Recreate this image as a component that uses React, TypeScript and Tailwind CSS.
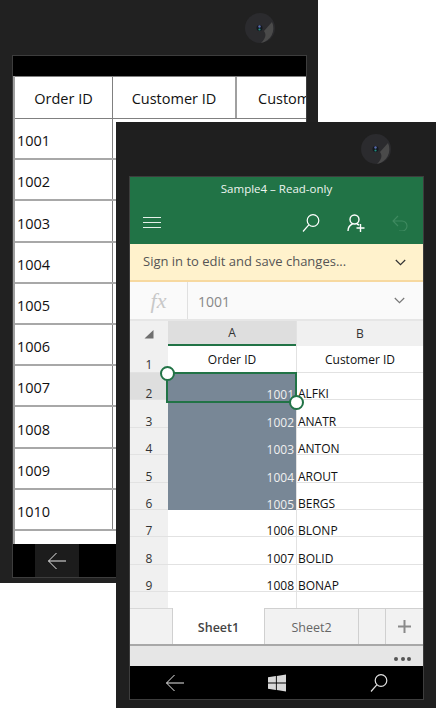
const font = "font-['Open_Sans','Noto_Sans',sans-serif]";

function Camera() {
  return (
    <svg width="32" height="32" viewBox="0 0 32 32">
      <circle cx="16" cy="16" r="15" fill="#2b2b2e" />
      <path d="M28 10 A15 15 0 0 1 17 31 Q24 24 20 19 Z" fill="#4a4a4a" />
      <circle cx="15.5" cy="16" r="3" fill="#14181f" />
      <circle cx="15.5" cy="14.5" r="1.2" fill="#5a6cb0" />
      <circle cx="15.5" cy="17.5" r="1.1" fill="#1f8f80" />
    </svg>
  );
}

function BackArrow() {
  return (
    <svg width="20" height="18" viewBox="0 0 20 18" fill="none" stroke="#e8e8e8" strokeWidth="1">
      <path d="M19 9H1.5M9.5 1 1.5 9l8 8" />
    </svg>
  );
}

function SearchIcon({ color = '#fff' }: { color?: string }) {
  return (
    <svg width="18" height="18" viewBox="0 0 18 18" fill="none" stroke={color} strokeWidth="1.2">
      <circle cx="11" cy="6.500" r="5.800" />
      <path d="M6.800 10.800 1 17.500" />
    </svg>
  );
}

function Chevron({ color }: { color: string }) {
  return (
    <svg width="11" height="7" viewBox="0 0 11 7" fill="none" stroke={color} strokeWidth="1.2">
      <path d="M.8 1 5.5 5.700 10.200 1" />
    </svg>
  );
}

const backRows = ['1001', '1002', '1003', '1004', '1005', '1006', '1007', '1008', '1009', '1010'];

function BackPhone() {
  return (
    <div className="absolute left-0 top-0 h-[583px] w-[318px] bg-[#212121] flex flex-col">
      <div className="h-[55px] flex justify-end pr-[42px] pt-[12px] shrink-0">
        <Camera />
      </div>
      <div className="ml-[12px] w-[295px] h-[523px] border border-[#3d3d3d] flex flex-col overflow-hidden">
        <div className="h-[20px] bg-black shrink-0" />
        <div className="flex-1 bg-white border-l-2 border-[#a0a0a0] overflow-hidden">
          <div className="flex h-[43px] border-y border-[#808080] w-[400px] text-[14.500px] text-[#111]">
            <div className="w-[98px] border-r border-[#808080] flex items-center justify-center pt-[2px]">Order ID</div>
            <div className="w-[124px] border-r-2 border-[#a0a0a0] flex items-center justify-center pt-[2px]">Customer ID</div>
            <div className="pl-[21px] pt-[2px] flex items-center">Customer ID</div>
          </div>
          {backRows.map(id => (
            <div key={id} className="flex h-[41.2px] border-b-2 border-[#a8a8a8] text-[14.500px] text-[#111]">
              <div className="w-[98px] border-r border-[#808080] flex items-center pl-[2px] pt-[5px]">{id}</div>
            </div>
          ))}
        </div>
        <div className="h-[33px] bg-black shrink-0 pl-[22px] flex">
          <div className="w-[44px] bg-[#1c1c1c] flex items-center justify-center">
            <BackArrow />
          </div>
        </div>
      </div>
    </div>
  );
}

const cols = 'grid grid-cols-[38px_128px_127px]';

const frontRows = [
  ['2', '1001', 'ALFKI'],
  ['3', '1002', 'ANATR'],
  ['4', '1003', 'ANTON'],
  ['5', '1004', 'AROUT'],
  ['6', '1005', 'BERGS'],
  ['7', '1006', 'BLONP'],
  ['8', '1007', 'BOLID'],
  ['9', '1008', 'BONAP'],
];

function Sheet() {
  return (
    <div className="relative flex-1 overflow-hidden bg-white">
      <div className={`${cols} h-[25px] bg-[#f0f0f0] text-[12px] text-[#333]`}>
        <div className="flex items-center justify-center">
          <svg width="10" height="10" viewBox="0 0 10 10">
            <path d="M9.500 1v8.500H.5z" fill="#6f6f6f" />
          </svg>
        </div>
        <div className="bg-[#dedede] border-b-2 border-[#217346] flex items-center justify-center pt-[1px]">A</div>
        <div className="flex items-center justify-center pb-[1px] pt-[2px] border-l border-[#e2e2e2]">B</div>
      </div>
      <div className={`${cols} h-[27px] text-[12px] text-[#111] border-b border-[#e2e2e2]`}>
        <div className="bg-[#f0f0f0] flex items-end justify-center leading-[14px] text-[#333]">1</div>
        <div className="flex items-center justify-center pt-[2px]">Order ID</div>
        <div className="flex items-center justify-center pt-[2px] border-l border-[#e2e2e2]">Customer ID</div>
      </div>
      {frontRows.map(([n, id, name], i) => (
        <div key={n} className={`${cols} h-[27.4px] text-[12px] leading-[10px]`}>
          <div className={`${i === 0 ? 'bg-[#dedede]' : 'bg-[#f0f0f0]'} border-b border-[#e2e2e2] flex items-end justify-center text-[#333]`}>{n}</div>
          <div className={`${i < 5 ? 'bg-[#788796] text-[#f0f0f0]' : 'bg-white text-[#111] border-b border-[#e2e2e2]'} flex items-end justify-end pr-[2px]`}>{id}</div>
          <div className="border-b border-l border-[#e2e2e2] text-[#111] flex items-end pl-[1px]">{name}</div>
        </div>
      ))}
      <div className={`${cols} h-[16px]`}>
        <div className="bg-[#f0f0f0]" />
        <div />
        <div className="border-l border-[#e2e2e2]" />
      </div>
      {/* selection box over row 2 */}
      <div className="absolute left-[36px] top-[51px] w-[131px] h-[31px] border-2 border-[#217346]" />
      <div className="absolute left-[29.500px] top-[44.500px] w-[15px] h-[15px] rounded-full bg-white border-2 border-[#217346]" />
      <div className="absolute left-[158.500px] top-[73.500px] w-[15px] h-[15px] rounded-full bg-white border-2 border-[#217346]" />
    </div>
  );
}

function FrontPhone() {
  return (
    <div className="absolute left-[116px] top-[122px] h-[586px] w-[320px] bg-[#1f1f1f] flex flex-col">
      <div className="h-[54px] flex justify-end pr-[44px] pt-[11px] shrink-0">
        <Camera />
      </div>
      <div className="ml-[13px] w-[295px] h-[524px] border border-[#3d3d3d] flex flex-col overflow-hidden">
        <div className="h-[67px] bg-[#217346] shrink-0 flex flex-col">
          <div className="h-[24px] text-center text-[11.500px] text-[#eef5f0] leading-[24px]">Sample4 – Read-only</div>
          <div className="flex-1 flex items-center pl-[13px]">
            <svg width="19" height="13" viewBox="0 0 19 13" stroke="#e6f0ea" strokeWidth="1">
              <path d="M0 1.500h18M0 6.500h18M0 11.500h18" />
            </svg>
            <div className="ml-[140px]">
              <SearchIcon />
            </div>
            <div className="ml-[27px]">
              <svg width="18" height="18" viewBox="0 0 18 18" fill="none" stroke="#fff" strokeWidth="1.400">
                <circle cx="7.500" cy="5.500" r="4.500" />
                <path d="M1 17c0-3.500 2-6 4.500-7M10 10c.8.3 1.400.7 2 1.300M9.500 14h8M13.500 10v8" />
              </svg>
            </div>
            <div className="ml-[27px]">
              <svg width="16" height="16" viewBox="0 0 16 16" fill="none" stroke="#3f8a60" strokeWidth="1.100">
                <path d="M6 1 1 6l5 5M1 6h9a5 5 0 0 1 0 10H7" />
              </svg>
            </div>
          </div>
        </div>
        <div className="h-[38px] bg-[#fff2cc] border-b-2 border-[#f7d9a0] shrink-0 flex items-center justify-between pl-[13px] pr-[17px] text-[13px] text-[#555]">
          <span>Sign in to edit and save changes...</span>
          <Chevron color="#333" />
        </div>
        <div className="h-[39px] bg-[#fafafa] border-b-2 border-[#e6e6e6] shrink-0 flex items-center">
          <div className="w-[58px] h-full border-r border-[#e0e0e0] flex items-center justify-center text-[22px] italic text-[#c8c8c8] font-['Liberation_Serif',serif]">fx</div>
          <div className="flex-1 pl-[10px] pt-[2px] text-[14px] text-[#888]">1001</div>
          <div className="pr-[18px]">
            <Chevron color="#777" />
          </div>
        </div>
        <Sheet />
        <div className="h-[38px] bg-[#f2f2f2] border-b-2 border-[#a8a8a8] shrink-0 flex text-[12.500px]">
          <div className="w-[42px] border-t border-[#d8d8d8]" />
          <div className="w-[93px] bg-white border-l border-r border-[#d0d0d0] flex items-center justify-center pt-[4px] font-semibold text-[#444]">Sheet1</div>
          <div className="w-[94px] border-t border-r border-[#d0d0d0] flex items-center justify-center pt-[4px] text-[#666]">Sheet2</div>
          <div className="w-[27px] border-t border-r border-[#d0d0d0]" />
          <div className="flex-1 border-t border-[#d0d0d0] flex items-center justify-center">
            <svg width="13" height="13" viewBox="0 0 13 13" stroke="#8a8a8a" strokeWidth="2">
              <path d="M6.500 0v13M0 6.500h13" />
            </svg>
          </div>
        </div>
        <div className="h-[20px] bg-[#e6e6e6] shrink-0 flex items-center justify-end gap-[2.500px] pr-[12px] pt-[5px]">
          <div className="w-[4px] h-[4px] rounded-full bg-[#555]" />
          <div className="w-[4px] h-[4px] rounded-full bg-[#555]" />
          <div className="w-[4px] h-[4px] rounded-full bg-[#555]" />
        </div>
        <div className="h-[33px] bg-black shrink-0 flex items-center pl-[35px]">
          <BackArrow />
          <div className="ml-[83px]">
            <svg width="18" height="18" viewBox="0 0 18 18" fill="#d8d8d8">
              <path d="M0 3.200 7.900 2v6.500H0zM8.800 1.900 18 .5v8H8.800zM0 9.500h7.900V16L0 14.800zM8.800 9.500H18v8L8.800 16.100z" />
            </svg>
          </div>
          <div className="ml-[84px]">
            <SearchIcon color="#e0e0e0" />
          </div>
        </div>
      </div>
    </div>
  );
}

export default function App() {
  return (
    <div className={`relative w-[436px] h-[708px] bg-white overflow-hidden ${font}`}>
      <BackPhone />
      <FrontPhone />
    </div>
  );
}
